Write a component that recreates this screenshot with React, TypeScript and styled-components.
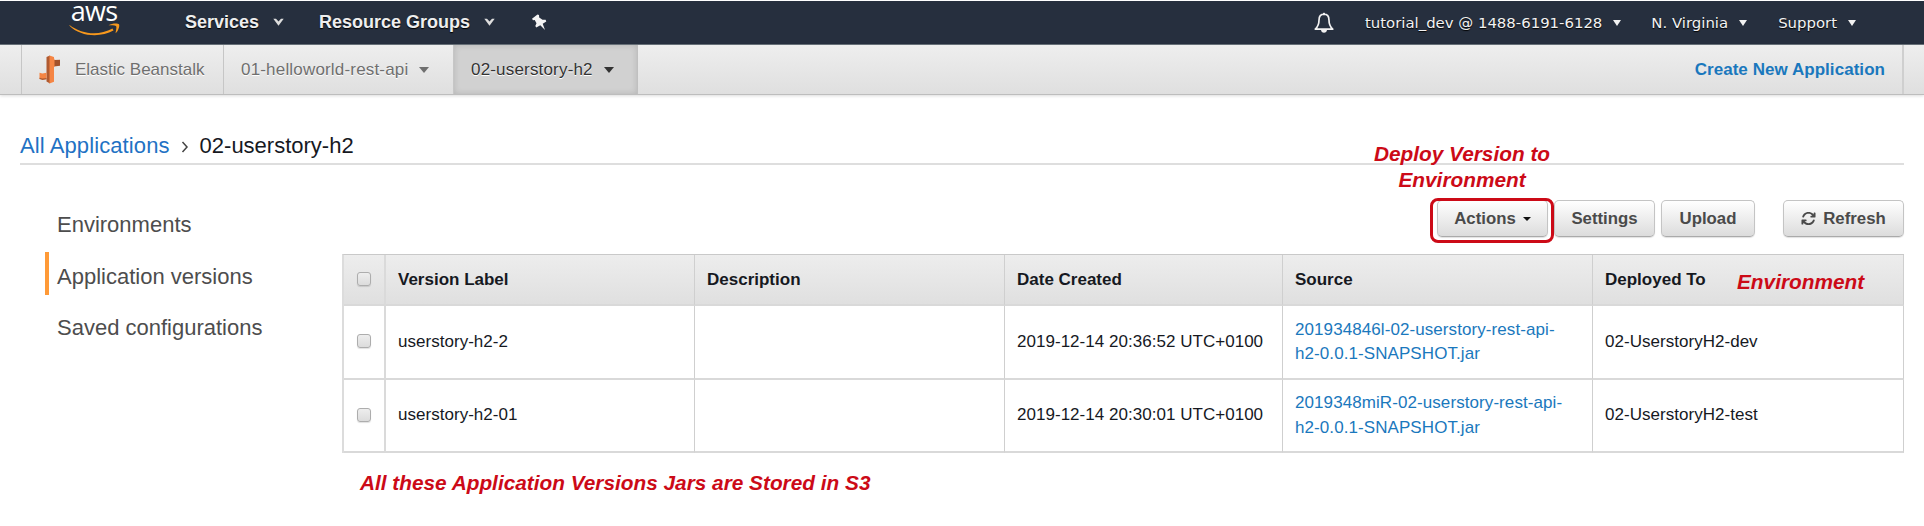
import React from 'react';
import styled, { createGlobalStyle } from 'styled-components';
import { FaArrowsRotate } from 'react-icons/fa6';

const GlobalStyle = createGlobalStyle`
  * { box-sizing: border-box; }
  body {
    margin: 0;
    background: #fff;
    color: #16191f;
    font: 17px "Liberation Sans", Arial, sans-serif;
    overflow: hidden;
  }
  a { color: inherit; text-decoration: none; }
`;

const Page = styled.div`
  height: 526px;
  padding-top: 1px;
`;

/* Top navigation */
const TopBar = styled.header`
  display: flex;
  align-items: center;
  height: 44px;
  padding: 0 68px 0 69px;
  background: #262f3e;
  border-bottom: 1px solid #69727a;
  color: #f2f2f2;
`;

const Brand = styled.a`
  display: flex;
  flex-direction: column;
  align-items: center;
  width: 50px;
  height: 43px;
  margin-right: 66px;
`;

const BrandName = styled.span`
  height: 22px;
  font: 500 27px/20px "Open Sans", sans-serif;
  letter-spacing: -0.7px;
  color: #fff;
`;

const PrimaryItem = styled.a<{ $gap: number }>`
  display: flex;
  align-items: center;
  gap: 14px;
  margin-right: ${(p) => p.$gap}px;
  padding-bottom: 1px;
  font-size: 18px;
  font-weight: bold;
  text-shadow: 0 1px 1px #000;
  color: #eee;
`;

const Account = styled.nav`
  display: flex;
  align-items: center;
  margin-left: auto;
  font: 14.9px "DejaVu Sans", Verdana, sans-serif;
  text-shadow: 0 1px 1px #000;
`;

const AccountItem = styled.a<{ $gap: number }>`
  display: flex;
  align-items: center;
  gap: 11px;
  margin-left: ${(p) => p.$gap}px;
`;

const Caret = styled.i<{ $w?: number; $h?: number }>`
  width: 0;
  height: 0;
  border-style: solid;
  border-color: currentColor transparent transparent;
  border-width: ${(p) => p.$h ?? 6}px ${(p) => (p.$w ?? 8) / 2}px 0;
`;

/* Service bar */
const ServiceBar = styled.nav`
  display: flex;
  height: 50px;
  padding: 0 20px 0 21px;
  background: linear-gradient(#eeeeee, #dfdfdf);
  border-bottom: 1px solid #bdbdbd;
  box-shadow: 0 1px 3px rgba(0, 0, 0, 0.14);
`;

const Tab = styled.a<{ $width: number; $active?: boolean }>`
  display: flex;
  align-items: center;
  gap: 11px;
  width: ${(p) => p.$width}px;
  padding: 0 0 0 17px;
  border-left: 1px solid #c6c6c6;
  color: ${(p) => (p.$active ? '#333' : '#6f6f6f')};
  letter-spacing: 0.18px;
  text-shadow: 0 1px 0 #fff;
  white-space: nowrap;
  ${(p) =>
    p.$active &&
    `background: #d1d1d1;
     box-shadow: inset 0 0 6px rgba(0, 0, 0, 0.14);
     border-right: 1px solid #c0c0c0;`}
`;

const ServiceName = styled.span`
  margin-left: 3px;
  letter-spacing: 0;
`;

const CreateLink = styled.a`
  display: flex;
  align-items: center;
  margin-left: auto;
  padding: 0 17px 0 0;
  border-right: 2px solid #cfcfcf;
  font-weight: bold;
  letter-spacing: 0.05px;
  color: #1a78bd;
`;

/* Page heading */
const Heading = styled.div`
  position: relative;
  display: flex;
  align-items: center;
  height: 70px;
  margin: 0 20px 0 20px;
  padding-top: 34px;
  padding-bottom: 1px;
  border-bottom: 2px solid #dedede;
  font-size: 22px;
  white-space: nowrap;
`;

const HeadingLink = styled.a`
  letter-spacing: 0.1px;
  color: #1f72c4;
`;

const Chevron = styled.svg`
  margin: 2px 11px 0 11px;
`;

const Body = styled.div`
  display: flex;
  padding: 0 20px 0 45px;
`;

const SideNav = styled.nav`
  display: flex;
  flex-direction: column;
  gap: 8px;
  width: 297px;
  padding-top: 35px;
`;

const SideItem = styled.a<{ $active?: boolean }>`
  height: 43.5px;
  padding-left: 8px;
  border-left: 4px solid ${(p) => (p.$active ? '#ff9a37' : 'transparent')};
  font-size: 22px;
  line-height: 50px;
  color: #4d4d4d;
`;

const Main = styled.main`
  width: 1562px;
  padding-top: 35px;
`;

const Toolbar = styled.div`
  display: flex;
  justify-content: flex-end;
  height: 54px;
`;

const Button = styled.button<{ $width: number; $gap?: number }>`
  position: relative;
  display: flex;
  align-items: center;
  justify-content: center;
  gap: 7px;
  width: ${(p) => p.$width}px;
  height: 37px;
  margin-left: ${(p) => p.$gap ?? 6}px;
  padding: 0;
  border: 1px solid #c4c4c4;
  border-bottom-color: #aaa;
  border-radius: 5px;
  background: linear-gradient(#ffffff, #dcdcdc);
  box-shadow: 0 1px 1px rgba(0, 0, 0, 0.12);
  font: bold 16.8px "Liberation Sans", Arial, sans-serif;
  color: #4a4a4a;
`;

const ActionsCaret = styled(Caret)`
  color: #111;
`;

const Highlight = styled.span`
  position: absolute;
  inset: -3px -7px -7px -8px;
  border: 3px solid #cc0a17;
  border-radius: 8px;
`;

/* Versions table */
const Table = styled.div`
  border-top: 1px solid #c9c9c9;
  border-left: 2px solid #dcdcdc;
`;

const Row = styled.div<{ $head?: boolean }>`
  display: grid;
  grid-template-columns: 42px 309px 310px 278px 310px 311px;
  height: ${(p) => (p.$head ? 51 : 73.5)}px;
  ${(p) => p.$head && 'background: linear-gradient(#ededed, #dfdfdf); font-weight: bold;'}
`;

const Cell = styled.div`
  position: relative;
  display: flex;
  align-items: center;
  padding-left: 12px;
  border-right: 1px solid #cfcfcf;
  border-bottom: 2px solid #d9d9d9;
  line-height: 24.5px;
  letter-spacing: 0.03px;
  white-space: nowrap;
`;

const HeadCell = styled(Cell)`
  padding-top: 1px;
  letter-spacing: 0;
`;

const CheckCell = styled(Cell)`
  justify-content: center;
  padding: 0 0 1px;
  border-right: 2px solid #dadada;
`;

const Check = styled.span`
  width: 14px;
  height: 14px;
  border: 1px solid #adadad;
  border-radius: 3px;
  background: linear-gradient(#eeeeee, #dcdcdc);
  box-shadow: 0 1px 1px rgba(0, 0, 0, 0.12);
`;

const SourceLink = styled.a`
  padding-top: 1px;
  letter-spacing: 0.08px;
  color: #1a78bd;
`;

/* Red remarks laid over the page */
const Note = styled.span<{ $left: number; $top: number }>`
  position: absolute;
  z-index: 1;
  left: ${(p) => p.$left}px;
  top: ${(p) => p.$top}px;
  font: italic bold 20.8px/26px "Liberation Sans", Arial, sans-serif;
  letter-spacing: 0;
  text-align: center;
  white-space: nowrap;
  color: #cc0a17;
`;

const Footer = styled.div`
  position: relative;
`;

const DownMark = () => (
  <svg width="11" height="8" viewBox="0 0 11 8">
    <path d="M0.3 0.8H3L5.5 3.6 8 0.8H10.7L5.5 7.8Z" fill="#ddd" />
  </svg>
);

const Swoosh = () => (
  <svg width="51" height="13" viewBox="0 0 51 13">
    <path d="M0.5 2C13 11.5 30 13 43.5 5.5L44.5 7.5C31 15 11 13.5 0.5 2.7Z" fill="#f7981d" />
    <path d="M39.5 2.3C43 0 49 0 50 1.2 51 3 49 8.5 46.5 10.3 47 7 48 4 47 3 45.5 2.2 42 2.4 39.5 2.3Z" fill="#f7981d" />
  </svg>
);

const Pin = () => (
  <svg width="17" height="17" viewBox="0 0 17 17">
    <path d="M6.5 0.5L1 4.8 2 6.3 3.7 6 5.5 9.2 4.3 12 5.3 13.5 9.3 11.3 14 16 11.7 9.8 15.3 7.5 14.6 5.8 11.5 5.8 8.2 3.6 8 1Z" fill="#f4f4f4" />
  </svg>
);

const Bell = () => (
  <svg width="20" height="22" viewBox="0 0 20 22">
    <path d="M10 2.2C6.2 2.2 5 5 5 8.2 5 13 3.5 15 1.3 17.2H18.7C16.5 15 15 13 15 8.2 15 5 13.8 2.2 10 2.2Z" fill="none" stroke="#f2f2f2" strokeWidth="1.7" strokeLinejoin="round" />
    <path d="M8.8 2C8.8 0.4 11.2 0.4 11.2 2ZM7 17.8H13C13 21.6 7 21.6 7 17.8Z" fill="#f2f2f2" />
  </svg>
);

const BeanstalkIcon = () => (
  <svg width="22" height="29" viewBox="0 0 22 29">
    <path d="M7.5 2L11 0.5V28.5L7.5 26.5Z" fill="#b05a30" />
    <path d="M10.5 0.5L15 2V26.8L10.5 28.5Z" fill="#f58544" />
    <path d="M15 5L21 4.8V10.8L15 11.5Z" fill="#a3522b" />
    <path d="M12.5 4L15.5 3.8V12L12.5 12.3Z" fill="#f58544" />
    <path d="M0.5 17.8L3.5 18.5 7.5 17.8V24L3.5 24.5 0.5 23.8Z" fill="#f58544" />
    <path d="M0.5 22.8L3.5 23.4 7.5 23V24.2L3.5 25 0.5 24Z" fill="#b05a30" />
  </svg>
);

const versions = [
  {
    label: 'userstory-h2-2',
    created: '2019-12-14 20:36:52 UTC+0100',
    source: ['201934846l-02-userstory-rest-api-', 'h2-0.0.1-SNAPSHOT.jar'],
    deployed: '02-UserstoryH2-dev',
  },
  {
    label: 'userstory-h2-01',
    created: '2019-12-14 20:30:01 UTC+0100',
    source: ['2019348miR-02-userstory-rest-api-', 'h2-0.0.1-SNAPSHOT.jar'],
    deployed: '02-UserstoryH2-test',
  },
];

export default function App() {
  return (
    <Page>
      <GlobalStyle />
      <TopBar>
        <Brand>
          <BrandName>aws</BrandName>
          <Swoosh />
        </Brand>
        <PrimaryItem $gap={35}>Services <DownMark /></PrimaryItem>
        <PrimaryItem $gap={36}>Resource Groups <DownMark /></PrimaryItem>
        <Pin />
        <Account>
          <Bell />
          <AccountItem $gap={31}>tutorial_dev @ 1488-6191-6128 <Caret /></AccountItem>
          <AccountItem $gap={30}>N. Virginia <Caret /></AccountItem>
          <AccountItem $gap={31}>Support <Caret /></AccountItem>
        </Account>
      </TopBar>
      <ServiceBar>
        <Tab $width={202}><BeanstalkIcon /><ServiceName>Elastic Beanstalk</ServiceName></Tab>
        <Tab $width={230}>01-helloworld-rest-api <Caret $w={10} /></Tab>
        <Tab $width={185} $active>02-userstory-h2 <Caret $w={10} /></Tab>
        <CreateLink>Create New Application</CreateLink>
      </ServiceBar>
      <Heading>
        <HeadingLink>All Applications</HeadingLink>
        <Chevron width="8" height="12" viewBox="0 0 8 12">
          <path d="M1.5 1L6 6 1.5 11" fill="none" stroke="#444" strokeWidth="1.5" />
        </Chevron>
        <span>02-userstory-h2</span>
        <Note $left={1354} $top={46}>Deploy Version to<br />Environment</Note>
      </Heading>
      <Body>
        <SideNav>
          <SideItem>Environments</SideItem>
          <SideItem $active>Application versions</SideItem>
          <SideItem>Saved configurations</SideItem>
        </SideNav>
        <Main>
          <Toolbar>
            <Button $width={111}>Actions <ActionsCaret $w={8} $h={4} /><Highlight /></Button>
            <Button $width={101}>Settings</Button>
            <Button $width={94}>Upload</Button>
            <Button $width={121} $gap={28}><FaArrowsRotate size={15} /> Refresh</Button>
          </Toolbar>
          <Table>
            <Row $head>
              <CheckCell><Check /></CheckCell>
              <HeadCell>Version Label</HeadCell>
              <HeadCell>Description</HeadCell>
              <HeadCell>Date Created</HeadCell>
              <HeadCell>Source</HeadCell>
              <HeadCell>Deployed To<Note $left={144} $top={14}>Environment</Note></HeadCell>
            </Row>
            {versions.map((v) => (
              <Row key={v.label}>
                <CheckCell><Check /></CheckCell>
                <Cell>{v.label}</Cell>
                <Cell />
                <Cell>{v.created}</Cell>
                <Cell><SourceLink>{v.source[0]}<br />{v.source[1]}</SourceLink></Cell>
                <Cell>{v.deployed}</Cell>
              </Row>
            ))}
          </Table>
          <Footer>
            <Note $left={18} $top={17}>All these Application Versions Jars are Stored in S3</Note>
          </Footer>
        </Main>
      </Body>
    </Page>
  );
}
